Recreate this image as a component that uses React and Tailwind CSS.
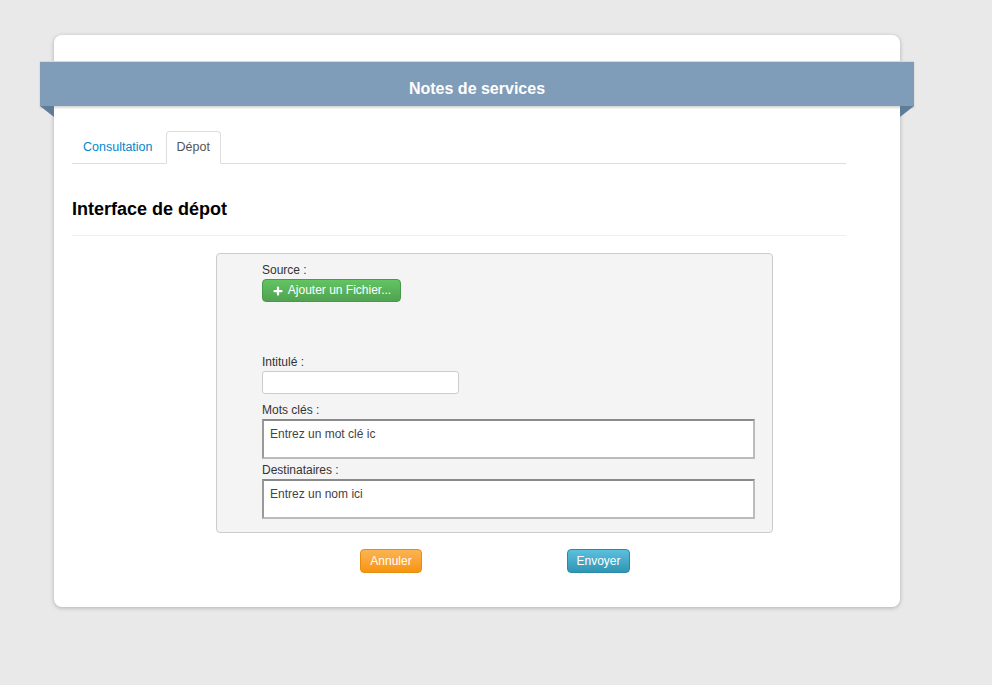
import { Plus } from "lucide-react";

export default function App() {
    return (
        <div className="min-h-screen bg-[#e9e9e9] pt-[35px] pb-10 font-['Liberation_Sans',Arial,sans-serif] text-[#333]">
            <div className="ml-[54px] w-[846px] bg-white rounded-[8px] shadow-[0_1px_4px_rgba(0,0,0,0.25)] pt-[26px] pb-[34px]">

                <div className="relative -mx-[14px]">
                    <div className="h-[46px] pt-[9px] bg-[#7f9cb8] border-y border-[#d8d8d8] shadow-[0_1px_2px_rgba(0,0,0,0.15)] flex items-center justify-center">
                        <h1 className="text-white font-bold text-[16px]">Notes de services</h1>
                    </div>
                    <svg className="absolute left-0 top-[45px]" width="14" height="11" viewBox="0 0 14 11">
                        <polygon points="0,0 14,0 14,11" fill="#5f7c98" />
                    </svg>
                    <svg className="absolute right-0 top-[45px]" width="14" height="11" viewBox="0 0 14 11">
                        <polygon points="0,0 14,0 0,11" fill="#5f7c98" />
                    </svg>
                </div>

                <div className="pl-[18px] pr-[54px] pt-[24px]">
                    <div className="flex border-b border-[#ddd] text-[12.5px]">
                        <a className="px-[11px] h-[32px] flex items-center text-[#0088cc] mr-[2px]">Consultation</a>
                        <span className="px-[10px] h-[33px] -mb-px flex items-center bg-white border border-[#ddd] border-b-white rounded-t-[4px] text-[#555]">
                            Dépot
                        </span>
                    </div>

                    <h2 className="mt-[35px] text-[18px] leading-[20px] font-bold text-black">Interface de dépot</h2>
                    <div className="mt-[16px] border-t border-[#eee]" />

                    <div className="ml-[144px] mt-[17px] w-[557px] bg-[#f4f4f4] border border-[#ccc] rounded-[4px] pl-[45px] pr-[18px] pt-[8px] pb-[13px] text-[12px] leading-[17px]">
                        <div>Source :</div>
                        <button className="h-[23px] w-[139px] flex items-center justify-center gap-[4px] rounded-[4px] border border-[#479a47] bg-gradient-to-b from-[#62c462] to-[#51a351] text-white text-[12px]">
                            <Plus size={12} strokeWidth={4.5} />
                            Ajouter un Fichier...
                        </button>

                        <div className="mt-[52px]">Intitulé :</div>
                        <input className="block h-[23px] w-[197px] bg-white border border-[#ccc] rounded-[3px]" />

                        <div className="mt-[8px]">Mots clés :</div>
                        <div className="h-[40px] w-[493px] bg-white border-2 border-[#999] border-b-[#bbb] border-r-[#bbb] border-t-[#8a8a8a] pl-[6px] pt-[5px]">
                            <span className="text-[#444]">Entrez un mot clé ic</span>
                        </div>

                        <div className="mt-[3px]">Destinataires :</div>
                        <div className="h-[40px] w-[493px] bg-white border-2 border-[#999] border-b-[#bbb] border-r-[#bbb] border-t-[#8a8a8a] pl-[6px] pt-[5px]">
                            <span className="text-[#444]">Entrez un nom ici</span>
                        </div>
                    </div>

                    <div className="flex mt-[16px] text-[12px]">
                        <button className="ml-[288px] h-[24px] w-[62px] rounded-[4px] border border-[#e38d13] bg-gradient-to-b from-[#fbb450] to-[#f89406] text-white">
                            Annuler
                        </button>
                        <button className="ml-[145px] h-[24px] w-[63px] rounded-[4px] border border-[#2a8aa6] bg-gradient-to-b from-[#5bc0de] to-[#2f96b4] text-white">
                            Envoyer
                        </button>
                    </div>
                </div>
            </div>
        </div>
    );
}
